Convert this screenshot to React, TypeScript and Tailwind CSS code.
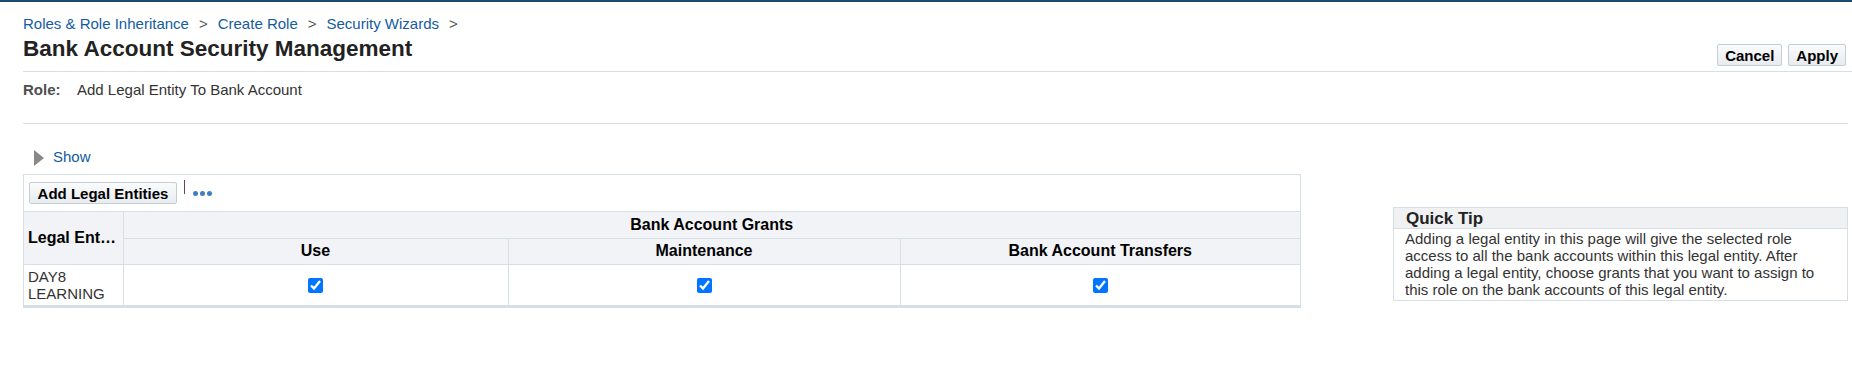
import React from 'react';

const font = { fontFamily: '"Liberation Sans", Arial, sans-serif' };

const Crumb = ({ label, last }: { label: string; last?: boolean }) => (
  <>
    <a className="text-[#145c9e] hover:underline cursor-pointer">{label}</a>
    <span className={last ? 'ml-[10px] text-[#555]' : 'mx-[10px] text-[#555]'}>&gt;</span>
  </>
);

const Check = () => (
  <input type="checkbox" defaultChecked className="w-[15px] h-[15px] m-0 align-middle accent-[#0075ff]" />
);

const App = () => {
  return (
    <div className="min-h-screen bg-white border-t-2 border-[#1d4a6b] text-[15px] text-[#333]" style={font}>
      {/* header */}
      <div className="flex items-end justify-between ml-[23px] pr-[6px] border-b border-[#d6dfe6]">
        <div className="pt-[13px] pb-[9px]">
          <div className="leading-[17px]">
            <Crumb label="Roles & Role Inheritance" />
            <Crumb label="Create Role" />
            <Crumb label="Security Wizards" last />
          </div>
          <h1 className="mt-[4px] text-[22.5px] leading-[26px] font-bold text-[#222]">Bank Account Security Management</h1>
        </div>
        <div className="flex gap-[6px] mb-[5px]">
          <button className="h-[22px] px-[7px] border border-[#c4ced7] rounded-[2px] bg-gradient-to-b from-[#fafbfc] to-[#e8ecef] font-bold text-[15px] text-[#000] leading-none">Cancel</button>
          <button className="h-[22px] px-[7px] border border-[#c4ced7] rounded-[2px] bg-gradient-to-b from-[#fafbfc] to-[#e8ecef] font-bold text-[15px] text-[#000] leading-none">Apply</button>
        </div>
      </div>

      {/* role */}
      <div className="ml-[23px] mr-[4px] pt-[9px] pb-[25px] border-b border-[#d6dfe6] leading-[17px] flex">
        <span className="font-bold text-[#4f4f4f] w-[54px]">Role:</span>
        <span>Add Legal Entity To Bank Account</span>
      </div>

      {/* content */}
      <div className="flex pl-[23px] pr-[4px]">
        <div className="w-[1278px]">
          <div className="flex items-center h-[17px] mt-[25px] mb-[8px] pl-[11px]">
            <svg width="10" height="16" viewBox="0 0 10 16" className="mr-[9px]">
              <polygon points="0,0 10,8 0,16" fill="#888" />
            </svg>
            <a className="text-[#145c9e] cursor-pointer">Show</a>
          </div>

          <div className="border border-b-2 border-[#d6dfe6]">
            <div className="flex items-start px-[5px] pt-[7px] pb-[7px] border-b border-[#d6dfe6]">
              <button className="h-[22px] w-[148px] border border-[#c4ced7] rounded-[2px] bg-gradient-to-b from-[#fafbfc] to-[#e8ecef] font-bold text-[15px] text-[#000] leading-none">Add Legal Entities</button>
              <div className="ml-[7px] w-px h-[14px] -mt-[2px] bg-[#5a4a5a]" />
              <div className="flex gap-[2px] ml-[8px] mt-[9px]">
                <span className="w-[5px] h-[5px] rounded-full bg-[#3f7fbf]" />
                <span className="w-[5px] h-[5px] rounded-full bg-[#3f7fbf]" />
                <span className="w-[5px] h-[5px] rounded-full bg-[#3f7fbf]" />
              </div>
            </div>
            <table className="w-full border-collapse table-fixed">
              <colgroup>
                <col className="w-[99px]" />
                <col className="w-[385px]" />
                <col className="w-[392px]" />
                <col />
              </colgroup>
              <thead className="bg-[#f1f3f6] text-[#000] font-bold text-[16px]">
                <tr className="h-[26px]">
                  <th rowSpan={2} title="Legal Entity" className="border-r border-b border-[#d6dfe6] text-left pl-[4px] pr-[2px] whitespace-nowrap font-bold">Legal Ent…</th>
                  <th colSpan={3} className="border-b border-[#d6dfe6] text-center font-bold">Bank Account Grants</th>
                </tr>
                <tr className="h-[26px]">
                  <th className="border-r border-b border-[#d6dfe6] text-center font-bold">Use</th>
                  <th className="border-r border-b border-[#d6dfe6] text-center font-bold">Maintenance</th>
                  <th className="border-b border-[#d6dfe6] text-center font-bold">Bank Account Transfers</th>
                </tr>
              </thead>
              <tbody>
                <tr className="h-[40px]">
                  <td className="border-r border-b border-[#d6dfe6] pl-[4px] leading-[17px] py-[3px]">DAY8<br />LEARNING</td>
                  <td className="border-r border-b border-[#d6dfe6] text-center"><Check /></td>
                  <td className="border-r border-b border-[#d6dfe6] text-center"><Check /></td>
                  <td className="border-b border-[#d6dfe6] text-center"><Check /></td>
                </tr>
              </tbody>
            </table>
          </div>
        </div>

        <div className="ml-[92px] mt-[83px] w-[455px] self-start border border-[#d6dfe6]">
          <div className="bg-[#f0f1f3] border-b border-[#d6dfe6] h-[21px] pl-[12px] font-bold text-[17px] leading-[21px] text-[#222]">Quick Tip</div>
          <div className="pl-[11px] pr-[6px] pt-[1px] pb-[2px] leading-[17px] text-[#333]">
            Adding a legal entity in this page will give the selected role access to all the bank accounts within this legal entity. After adding a legal entity, choose grants that you want to assign to this role on the bank accounts of this legal entity.
          </div>
        </div>
      </div>
    </div>
  );
};

export default App;
